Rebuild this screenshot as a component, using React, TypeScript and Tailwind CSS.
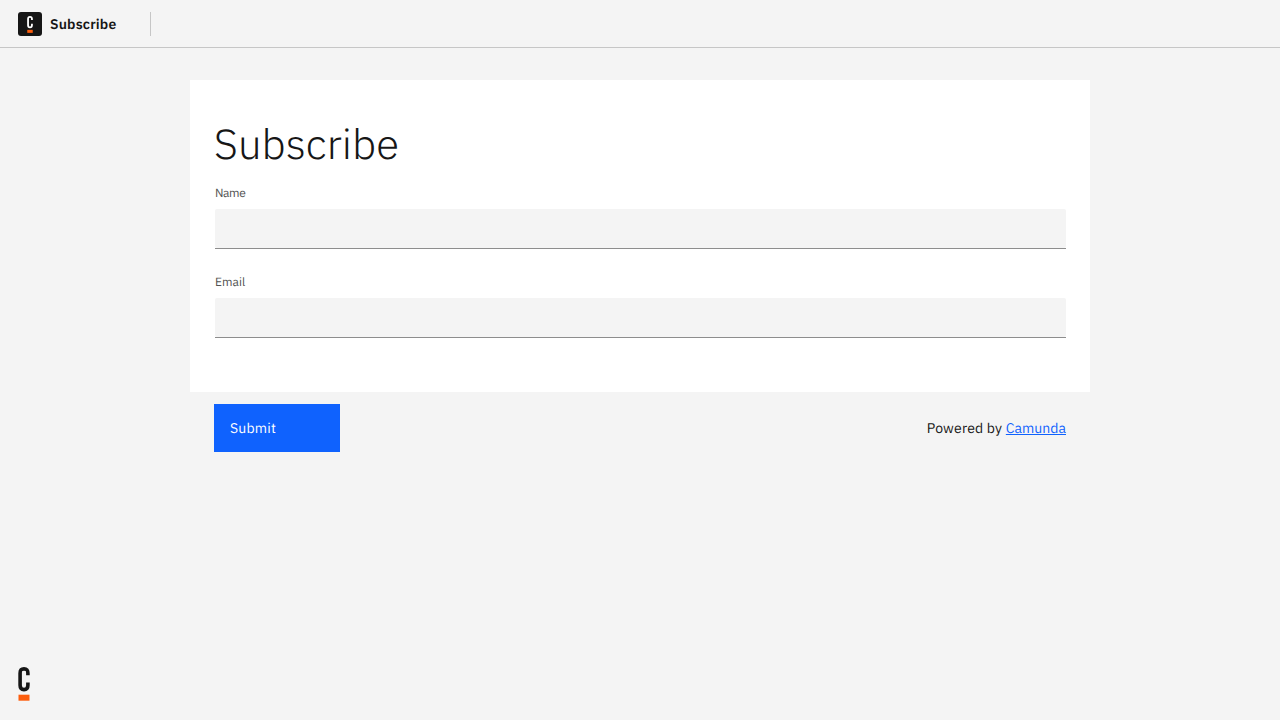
import React from "react";

function CamundaMark({ className, color }: { className: string; color: string }) {
  return (
    <svg viewBox="0 0 12 34" className={className} preserveAspectRatio="none" aria-hidden="true">
      <path
        d="M9.9 8.2V6.2C9.9 3.2 8.8 1.9 6 1.9S2.1 3.2 2.1 6.2v12.1c0 3 1.2 4.3 3.9 4.3s3.9-1.3 3.9-4.3v-2.9"
        fill="none"
        stroke={color}
        strokeWidth="3.6"
      />
      <rect x="0.5" y="27.7" width="11" height="6" fill="#fc5d0d" />
    </svg>
  );
}

function TextField({ id, label, labelClass }: { id: string; label: string; labelClass: string }) {
  return (
    <div className="flex h-[89px] flex-col">
      <label htmlFor={id} className={`mb-2 h-4 text-[12px] leading-[18px] text-[#525252] ${labelClass}`}>
        {label}
      </label>
      <div className="flex h-10 border-b border-[#8d8d8d]">
        <input id={id} type="text" className="h-[39px] w-full rounded-[2px] bg-[#f4f4f4] px-4 text-sm outline-none" />
      </div>
    </div>
  );
}

export default function App() {
  return (
    <div className="flex h-screen flex-col bg-[#f4f4f4] font-['IBM_Plex_Sans','Roboto',sans-serif] text-[#161616] [text-rendering:geometricPrecision]">
      <header className="flex h-12 shrink-0 items-center border-b border-[#c6c6c6] pl-[18px] pt-px">
        <div className="flex size-6 items-center justify-center rounded-[3px] bg-[#161616]">
          <CamundaMark className="h-[17px] w-[6px]" color="#ffffff" />
        </div>
        <div className="ml-2 w-[100px] text-[14px] leading-5 font-semibold tracking-[0.16px]">Subscribe</div>
        <div className="h-6 w-px bg-[#c6c6c6]" />
      </header>
      <main className="mx-auto mt-8 w-[900px]">
        <section className="h-[312px] bg-white px-6 pt-10">
          <h1 className="h-[50px] text-[42px] leading-[48px] font-light tracking-[0.05px]">Subscribe</h1>
          <div className="ml-px pt-[15px]">
            <TextField id="name" label="Name" labelClass="tracking-[-0.4px]" />
            <TextField id="email" label="Email" labelClass="tracking-normal" />
          </div>
        </section>
        <div className="mt-3 flex h-12 items-center justify-between px-6">
          <button className="h-12 w-[126px] bg-[#0f62fe] pl-4 text-left text-[14px] leading-[18px] tracking-[0.2px] text-white [text-rendering:inherit]">
            Submit
          </button>
          <p className="text-[14px] leading-[18px] tracking-[0.2px]">
            Powered by{" "}
            <a href="#" className="tracking-[0.04px] text-[#0f62fe] underline">
              Camunda
            </a>
          </p>
        </div>
      </main>
      <footer className="mt-auto pb-[19px] pl-[18px]">
        <CamundaMark className="h-[34px] w-3" color="#161616" />
      </footer>
    </div>
  );
}
